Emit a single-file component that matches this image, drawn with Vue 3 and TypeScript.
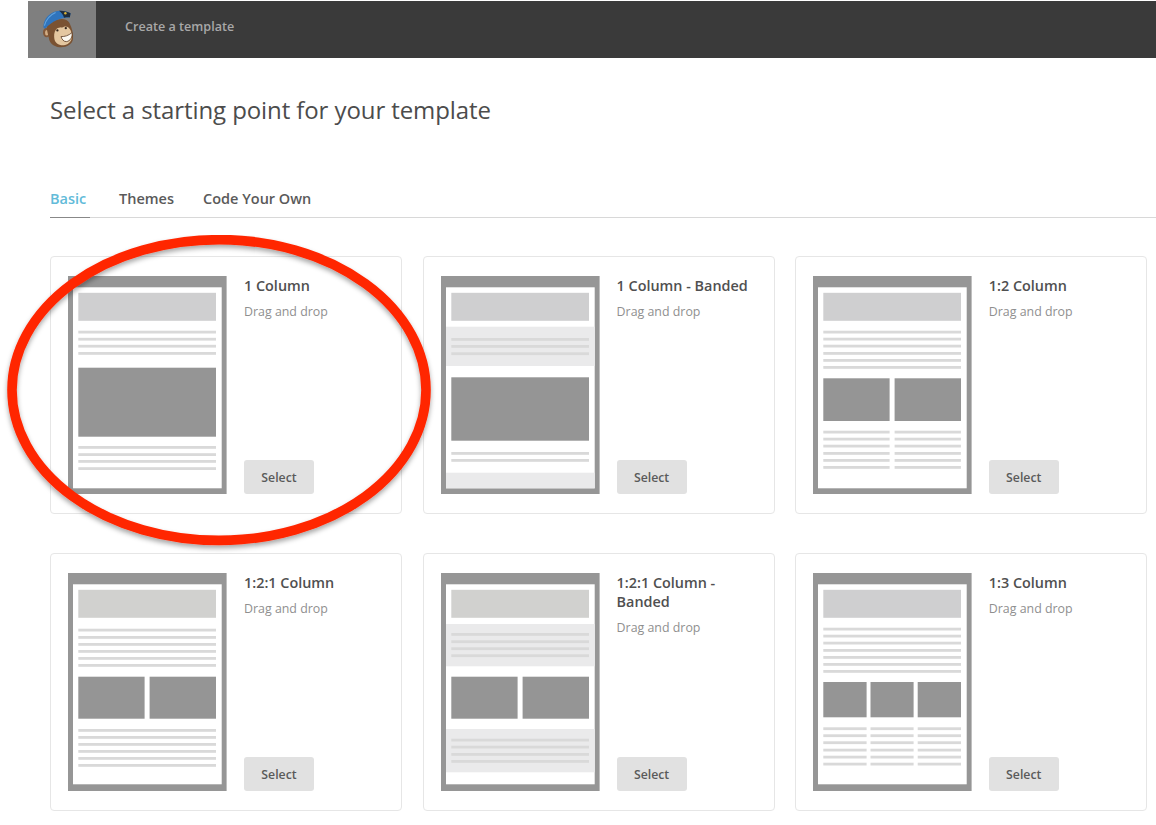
<script setup lang="ts">
type Rect = [number, number, number, number]
interface Tpl { name: string; hero: string; bands: [number, number][]; lines: [number, number, number][]; imgs: Rect[]; white: [number, number] }

const C1: [number, number] = [10.3, 137.7]
const ys = (list: number[], x: number, w: number): [number, number, number][] => list.map((y) => [x, y, w])
const cols = (list: number[], spans: [number, number][]) => spans.flatMap(([x, w]) => ys(list, x, w))
const two: [number, number][] = [[10.3, 66.3], [81.6, 66.3]]
const three: [number, number][] = [[10.3, 43.3], [57.5, 43.1], [104.7, 43.3]]

const templates: Tpl[] = [
  { name: '1 Column', hero: '#cfcfd0', white: [11.3, 201], bands: [],
    lines: ys([54.7, 61.8, 68.8, 76, 170, 177.2, 184, 191.2], C1[0], C1[1]),
    imgs: [[10.3, 91.7, 137.7, 69]] },
  { name: '1 Column - Banded', hero: '#cfcfd0', white: [11.3, 201], bands: [[50.7, 39.3], [196.7, 15.6]],
    lines: ys([62, 69, 76.3, 176, 183], C1[0], C1[1]),
    imgs: [[10.3, 101.3, 137.7, 63.4]] },
  { name: '1:2 Column', hero: '#cfcfd0', white: [11.3, 201], bands: [],
    lines: [...ys([54.7, 61.7, 68.7, 76, 83, 90], C1[0], C1[1]), ...cols([154.7, 161.7, 168.7, 176, 183, 190], two)],
    imgs: [[10.3, 102.3, 66.3, 42.7], [81.6, 102.3, 66.4, 42.7]] },
  { name: '1:2:1 Column', hero: '#d1d1cf', white: [11.3, 200], bands: [],
    lines: ys([55.7, 63, 70, 77, 84, 91, 156, 163, 170, 177, 184, 191], C1[0], C1[1]),
    imgs: [[10.3, 103.7, 66.3, 42], [81.6, 103.7, 66.4, 42]] },
  { name: '1:2:1 Column - Banded', hero: '#d1d1cf', white: [11.3, 200], bands: [[51, 42.3], [156, 43.3]],
    lines: ys([60, 67.3, 74.3, 81.3, 165.7, 172.7, 180, 187], C1[0], C1[1]),
    imgs: [[10.3, 103.7, 66.3, 42], [81.6, 103.7, 66.4, 42]] },
  { name: '1:3 Column', hero: '#cfcfd0', white: [11.3, 200], bands: [],
    lines: [...ys([54.7, 61.7, 68.7, 76, 83, 90, 97], C1[0], C1[1]), ...cols([154.3, 161.3, 168.3, 175.7, 182.7, 189.7], three)],
    imgs: [[10.3, 109, 43.3, 35.3], [57.5, 109, 43.1, 35.3], [104.7, 109, 43.3, 35.3]] }
]
const tabs = ['Basic', 'Themes', 'Code Your Own']
</script>

<template>
  <div class="page">
    <header class="bar">
      <div class="logo">
        <svg width="68" height="57" viewBox="0 0 68 57" aria-hidden="true">
          <ellipse cx="18.6" cy="31.5" rx="3.6" ry="4.8" fill="#83593a" />
          <ellipse cx="18.8" cy="31.7" rx="1.8" ry="2.7" fill="#d2ad84" />
          <path d="M19 25 C24 18 38 15 41.5 22 C44 27 45.6 33 45 38 C44.4 43.5 38 46.8 31.5 46.2 C26 45.7 21.6 42.4 20.8 37 C20.2 33 18.4 29 19 25 Z" fill="#7a5232" />
          <path d="M28 28.4 C30.5 25.6 33.6 27.4 36 25.8 C39.8 24.4 43 28 43.8 33 C44.8 38.8 41.6 43.4 36 44.2 C31 44.8 27 42 26.4 38 C26 35 25.8 31 28 28.4 Z" fill="#e4c7a0" />
          <path d="M33 35.6 C36.5 35.8 40.6 34.6 44 31.6 C44.8 35.6 42.4 40.2 38.4 40.6 C35.8 40.8 33.8 38.4 33 35.6 Z" fill="#fbf8f0" stroke="#5a3a22" stroke-width=".8" />
          <circle cx="29.4" cy="29.4" r="1.15" fill="#33241a" />
          <circle cx="37.8" cy="27.2" r="1.15" fill="#33241a" />
          <path d="M15.4 25.6 C15.6 18 21 12.4 27 10.4 C32 9 38.6 9.6 42.6 12.2 L41.8 16.4 C33 16.2 24 20 17.6 27.2 C16.4 28 15.4 27.2 15.4 25.6 Z" fill="#2f74bd" />
          <path d="M31 9.7 C34.6 9.4 39.6 10.2 42.6 12.2 L41.8 16.4 C40 16.3 38 16.4 36 16.7 C35.4 14 33.6 11.4 31 9.7 Z" fill="#1f2c3d" />
          <path d="M16.4 24.6 C18 18.6 22.6 13.6 27.6 11.4" fill="none" stroke="#64a4dd" stroke-width="1.1" />
          <circle cx="37.4" cy="12.2" r="1.2" fill="#d8b33a" />
        </svg>
      </div>
      <span class="crumb">Create a template</span>
    </header>

    <main class="main">
      <h1 class="title">Select a starting point for your template</h1>
      <nav class="tabs">
        <a v-for="(t, i) in tabs" :key="t" class="tab" :class="{ active: i === 0 }">{{ t }}</a>
      </nav>
      <section class="grid">
        <article v-for="t in templates" :key="t.name" class="card">
          <svg class="thumb" width="159" height="218" viewBox="0 0 159 218" aria-hidden="true">
            <rect width="158.6" height="218" fill="#969696" />
            <rect x="5" :y="t.white[0]" width="148.7" :height="t.white[1]" fill="#fff" />
            <rect v-for="(b, i) in t.bands" :key="'b' + i" x="5" :y="b[0]" width="148.7" :height="b[1]" fill="#eaeaeb" />
            <rect x="10.3" y="16.8" width="137.7" height="28" :fill="t.hero" />
            <rect v-for="(l, i) in t.lines" :key="'l' + i" :x="l[0]" :y="l[1]" :width="l[2]" height="2.8" fill="#d9d9d9" />
            <rect v-for="(r, i) in t.imgs" :key="'i' + i" :x="r[0]" :y="r[1]" :width="r[2]" :height="r[3]" fill="#959595" />
          </svg>
          <div class="info">
            <h2 class="name">{{ t.name }}</h2>
            <p class="kind">Drag and drop</p>
            <button class="select" type="button">Select</button>
          </div>
        </article>
      </section>
    </main>

    <svg class="ring" width="446" height="332" viewBox="0 0 446 332" aria-hidden="true">
      <defs>
        <filter id="ring-shadow" x="-5%" y="-5%" width="110%" height="112%">
          <feDropShadow dx="0" dy="3" stdDeviation="2.5" flood-color="#000" flood-opacity=".35" />
        </filter>
      </defs>
      <ellipse cx="219" cy="155" rx="207" ry="150.4" fill="none" stroke="#ff2600" stroke-width="9.6" filter="url(#ring-shadow)" />
    </svg>
  </div>
</template>

<style scoped>
.page {
  position: relative;
  width: 1156px;
  height: 825px;
  overflow: hidden;
  background: #fff;
  font-family: "Open Sans", "Noto Sans", sans-serif;
}
.bar {
  display: flex;
  align-items: flex-start;
  height: 57px;
  margin: 1px 0 0 28px;
  background: #3a3a3a;
}
.logo {
  width: 68px;
  height: 57px;
  background: #7f7f7f;
}
.logo svg { display: block; }
.crumb {
  margin: 17px 0 0 29px;
  font-size: 12.6px;
  line-height: 18px;
  font-weight: 600;
  color: #a8a8a8;
}
.main { padding-left: 50px; }
.title {
  margin: 0;
  padding-top: 35px;
  font-size: 24px;
  line-height: 34px;
  letter-spacing: -0.09px;
  font-weight: 400;
  color: #4c4c4c;
}
.tabs {
  display: flex;
  gap: 29px;
  height: 36px;
  margin-top: 54px;
  border-bottom: 1px solid #d8d8d8;
}
.tab {
  height: 36px;
  font-size: 14.5px;
  line-height: 35px;
  font-weight: 600;
  color: #5a5a5a;
}
.tab.active {
  width: 40px;
  color: #62bbd9;
  box-shadow: 0 1px 0 #888;
}
.grid {
  display: grid;
  grid-template-columns: 352.4px 352px 352.4px;
  gap: 39px 20.2px;
  margin-top: 38px;
}
.card {
  display: flex;
  gap: 17px;
  box-sizing: border-box;
  height: 258px;
  padding: 19px 17px 19px 17px;
  border: 1px solid #e6e6e6;
  border-radius: 4px;
}
.thumb { display: block; flex: none; }
.info {
  display: flex;
  flex-direction: column;
  align-items: flex-start;
  flex: 1;
  min-width: 0;
}
.name {
  margin: 0;
  font-size: 14.4px;
  line-height: 19px;
  font-weight: 600;
  color: #505050;
}
.kind {
  margin: 7.5px 0 0;
  font-size: 12.4px;
  line-height: 18px;
  color: #8f8f8f;
}
.select {
  width: 70px;
  height: 34px;
  margin-top: auto;
  padding: 0;
  border: 0;
  border-radius: 3px;
  background: #e1e1e1;
  font: 600 12.3px "Open Sans", sans-serif;
  color: #5a5a5a;
}
.ring {
  position: absolute;
  left: 0;
  top: 235px;
  pointer-events: none;
}
</style>
